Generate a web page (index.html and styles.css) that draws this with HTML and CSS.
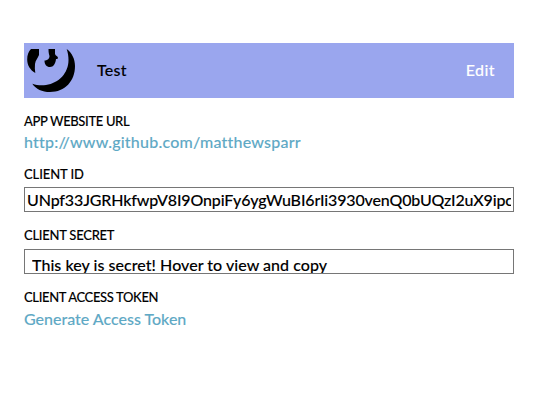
FILE: index.html
```html
<!DOCTYPE html>
<html lang="en">
<head>
<meta charset="utf-8">
<title>API Clients</title>
<link rel="stylesheet" href="styles.css">
</head>
<body>
<main class="client">
  <header class="bar">
    <svg class="logo" viewBox="0 0 54 55" aria-hidden="true">
      <path d="M7 6h8v6c-1 3-3.500 5-4 9-.3 3-.2 6 .3 9C6 27 3.200 22 3.200 16.500 3.200 12 4.500 8.500 7 6z"/>
      <path d="M24.500 6h6.500v5c.5 2 3 2 3 4 0 .8-1 1-2 1-.5 4.500-2.500 8-6 8-3.500 0-5.500-2.500-5.500-6.500 2.500 0 5-1.500 5-4.500C25 11 24.500 10 24.500 6z"/>
      <path d="M42.700 6C48 10 51 16 51 23c0 15-10 26-25 26-8 0-14-3-17.700-8.300C13 42.500 18 42.700 22 42c13-2 22.500-12 22.500-25 0-4-.6-7-1.800-11z"/>
    </svg>
    <span class="name">Test</span>
    <a class="edit">Edit</a>
  </header>
  <h2 class="label l-url">APP WEBSITE URL</h2>
  <a class="link k-url">http://www.github.com/matthewsparr</a>
  <h2 class="label l-id">CLIENT ID</h2>
  <div class="field"><span class="k-id">UNpf33JGRHkfwpV8I9OnpiFy6ygWuBI6rIi3930venQ0bUQzI2uX9ipc</span></div>
  <h2 class="label l-secret">CLIENT SECRET</h2>
  <div class="field secret"><span class="k-secret">This key is secret! Hover to view and copy</span></div>
  <h2 class="label l-token">CLIENT ACCESS TOKEN</h2>
  <a class="link k-token">Generate Access Token</a>
</main>
</body>
</html>
```
FILE: styles.css
```css
* { box-sizing: border-box; }
body { margin: 0; background: #fff; color: #000; font-family: Lato, sans-serif; font-size: 16px; font-weight: 500; -webkit-text-stroke: 0.1px; }
.client { width: 490px; margin: 43px 0 0 24px; display: flex; flex-direction: column; align-items: flex-start; white-space: nowrap; }
.bar { width: 490px; height: 55px; background: #9aa6ee; display: flex; align-items: center; }
.logo { width: 54px; height: 55px; }
.name { margin-left: 19px; padding-bottom: 2px; letter-spacing: 0.3px; }
.edit { margin-left: auto; margin-right: 19px; padding-bottom: 2px; letter-spacing: 0.4px; color: #fff; }
.label { margin: 12px 0 0; height: 20px; line-height: 22px; font-size: 13px; font-weight: 500; letter-spacing: -0.35px; }
.link { height: 24px; line-height: 24px; color: #5fa9c5; }
.k-url { letter-spacing: 0.22px; }
.l-id { margin-top: 9px; letter-spacing: -0.1px; }
.field { width: 490px; height: 25px; border: 1px solid #767676; padding: 0 2px; line-height: 23px; margin-top: 4px; overflow: hidden; }
.field span { display: block; overflow: hidden; }
.k-id { letter-spacing: -0.14px; }
.l-secret { letter-spacing: -0.25px; }
.secret { padding: 3px 7px 0; margin-top: 5px; }
.k-secret { letter-spacing: 0.04px; }
.l-token { letter-spacing: -0.35px; }
.k-token { margin-top: 1px; }
```
